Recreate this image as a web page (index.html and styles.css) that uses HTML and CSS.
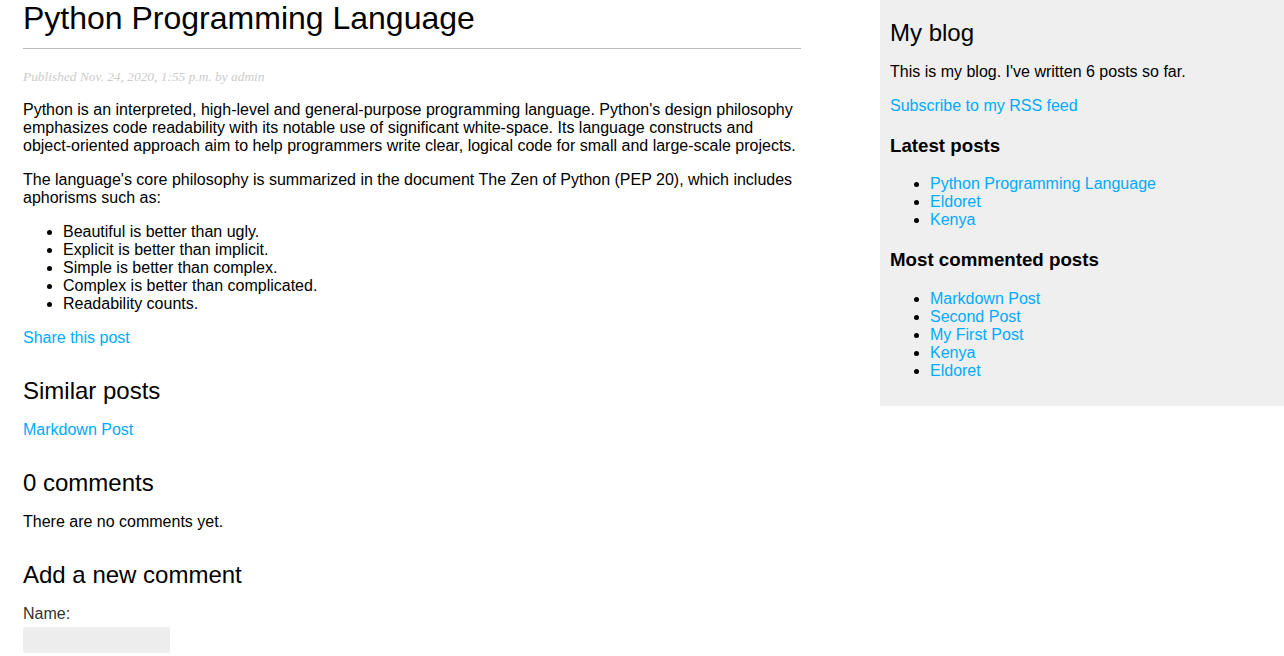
FILE: index.html
```html
<!DOCTYPE html>
<html>
<head>
<meta charset="utf-8">
<title>Python Programming Language</title>
<link rel="stylesheet" href="styles.css">
</head>
<body>
<div class="page">
  <div class="content">
    <h1>Python Programming Language</h1>
    <p class="date">Published Nov. 24, 2020, 1:55 p.m. by admin</p>
    <p>Python is an interpreted, high-level and general-purpose programming language. Python's design philosophy emphasizes code readability with its notable use of significant white-space. Its language constructs and object-oriented approach aim to help programmers write clear, logical code for small and large-scale projects.</p>
    <p>The language's core philosophy is summarized in the document The Zen of Python (PEP 20), which includes aphorisms such as:</p>
    <ul>
      <li>Beautiful is better than ugly.</li>
      <li>Explicit is better than implicit.</li>
      <li>Simple is better than complex.</li>
      <li>Complex is better than complicated.</li>
      <li>Readability counts.</li>
    </ul>
    <p><a href="#">Share this post</a></p>
    <h2>Similar posts</h2>
    <p><a href="#">Markdown Post</a></p>
    <h2>0 comments</h2>
    <p>There are no comments yet.</p>
    <h2>Add a new comment</h2>
    <form class="form">
      <label class="label" for="id_name">Name:</label>
      <input class="input" type="text" id="id_name">
    </form>
  </div>
  <div class="sidebar">
    <h2 class="side-title">My blog</h2>
    <p>This is my blog. I've written 6 posts so far.</p>
    <p><a href="#">Subscribe to my RSS feed</a></p>
    <h3>Latest posts</h3>
    <ul>
      <li><a href="#">Python Programming Language</a></li>
      <li><a href="#">Eldoret</a></li>
      <li><a href="#">Kenya</a></li>
    </ul>
    <h3>Most commented posts</h3>
    <ul>
      <li><a href="#">Markdown Post</a></li>
      <li><a href="#">Second Post</a></li>
      <li><a href="#">My First Post</a></li>
      <li><a href="#">Kenya</a></li>
      <li><a href="#">Eldoret</a></li>
    </ul>
  </div>
</div>
</body>
</html>
```

FILE: styles.css
```css
html, body {
  margin: 0;
  padding: 0;
}

body {
  font-family: "Liberation Sans", Arial, Helvetica, sans-serif;
  font-size: 16px;
  color: #000;
  background: #fff;
}

a {
  color: #00abff;
  text-decoration: none;
}

.page {
  display: flex;
  align-items: flex-start;
}

.content {
  width: 778px;
  margin-left: 23px;
}

h1 {
  font-size: 32px;
  font-weight: normal;
  margin: 0 0 20.44px;
  padding: 0 0 11px 0;
  border-bottom: 1px solid #bbb;
}

h2 {
  font-size: 24px;
  font-weight: normal;
  margin: 30px 0 0;
}

.date {
  color: #ccc;
  font-family: "Liberation Serif", Georgia, serif;
  font-size: 13.4px;
  font-style: italic;
  margin: 12px 0;
}

.form {
  margin-top: 16px;
  display: flex;
  flex-direction: column;
  align-items: flex-start;
}

.label {
  color: #333;
  margin-bottom: 4px;
}

.input {
  background: #ededed;
  border: 0;
  border-radius: 2px;
  padding: 6px 10px;
  font-size: 12px;
  font-family: "Liberation Sans", Arial, sans-serif;
  width: 127px;
  margin: 0 0 10px;
}

.sidebar {
  margin-left: auto;
  width: 384px;
  padding: 0 10px 10px;
  background: #efefef;
}

.side-title {
  margin-top: 18.5px;
}

h3 {
  font-size: 18.72px;
  margin: 20px 0 18.72px;
}
```
